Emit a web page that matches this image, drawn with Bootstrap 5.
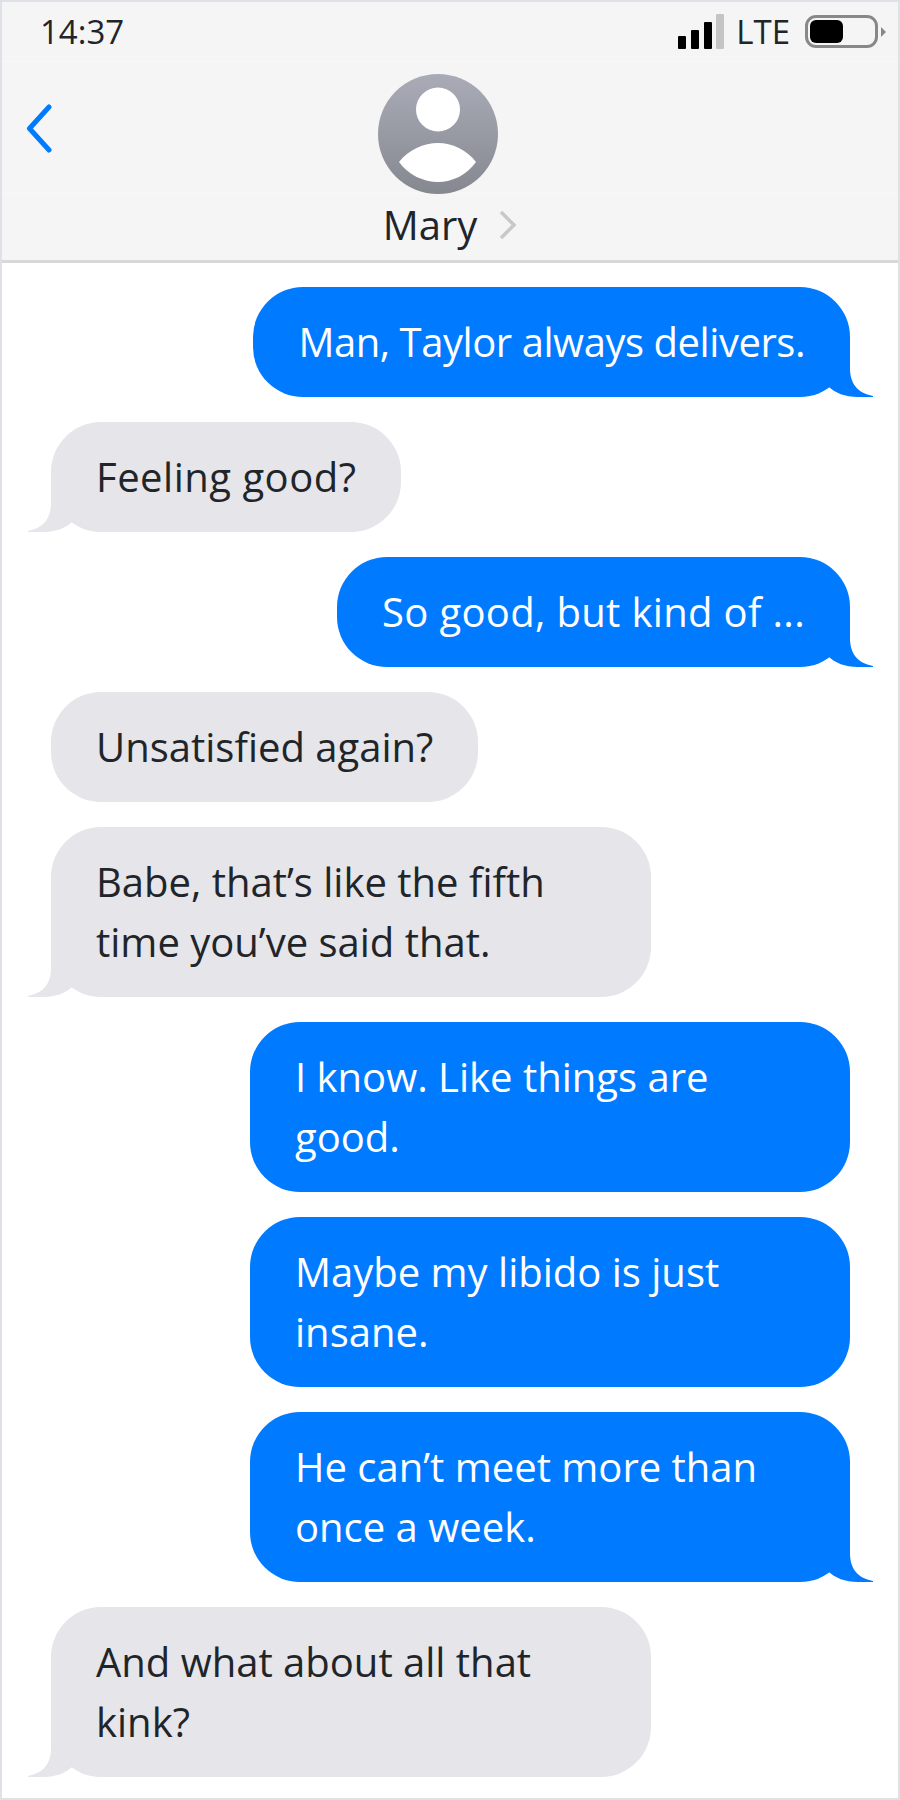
<!DOCTYPE html>
<html lang="en">
<head>
<meta charset="UTF-8">
<title>Messages</title>
<link rel="stylesheet" href="https://cdn.jsdelivr.net/npm/bootstrap@5.3.0/dist/css/bootstrap.min.css">
<style>
    body { background: #fff; font-family: "Open Sans", "Noto Sans", sans-serif; }
    .phone { width: 900px; height: 1800px; border: 2px solid #dee2e6; overflow: hidden; color: #212529; }
    .phone-head { height: 261px; background: #f5f5f5; border-bottom: 3px solid #d8d8d8; }
    .status-row { height: 60px; padding: 0 12px 0 38px; font-size: 33px; border-bottom: 1px solid #f8f8f8; }
    .signal { height: 35px; gap: 4.6px; }
    .signal i { display: block; width: 8px; background: #000; border-radius: 1px; }
    .signal i:last-child { background: #c4c4c4; }
    .lte-label { margin: 0 15px 0 12px; line-height: 1; }
    .batt { width: 73px; height: 33px; border: 3px solid #888; border-radius: 11px; padding: 2px; }
    .batt span { display: block; width: 33px; height: 100%; background: #000; border-radius: 6px; }
    .batt-nub { width: 0; height: 0; border-left: 5px solid #888; border-top: 5px solid transparent; border-bottom: 5px solid transparent; margin-left: 3px; }
    .nav-row { height: 132px; position: relative; border-bottom: 1px solid #f8f8f8; }
    .back-btn { position: absolute; left: 24px; top: 42px; }
    .avatar-pic { margin: 12px 24px 0 0; }
    .contact-row { height: 62px; gap: 22px; }
    .contact-name { font-size: 40px; line-height: 1; }
    .thread { padding: 24px 48px 0 49px; gap: 25px; }
    .bub { position: relative; max-width: 600px; padding: 25px 45px; font-size: 40px; line-height: 60px; border-radius: 50px; }
    .bub-me { background: #007aff; color: #fff; margin-left: auto; }
    .bub-them { background: #e5e5ea; color: #212529; margin-right: auto; }
    .bub-wide { width: 600px; }
    .track-tight { letter-spacing: -0.45px; }
    .track-mid { letter-spacing: 0.33px; }
    .track-loose { letter-spacing: 0.5px; }
    .tail { position: absolute; bottom: 0; width: 70px; height: 60px; }
    .bub-me .tail { right: -23px; fill: #007aff; }
    .bub-them .tail { left: -23px; fill: #e5e5ea; transform: scaleX(-1); }
</style>
</head>
<body>
<div class="phone">
    <div class="phone-head">
        <div class="status-row d-flex align-items-center">
            <span>14:37</span>
            <div class="signal d-flex align-items-end ms-auto">
                <i style="height:13px"></i><i style="height:19px"></i><i style="height:27px"></i><i style="height:35px"></i>
            </div>
            <span class="lte-label">LTE</span>
            <div class="batt"><span></span></div>
            <div class="batt-nub"></div>
        </div>
        <div class="nav-row d-flex justify-content-center">
            <svg class="back-btn" width="32" height="52" viewBox="0 0 32 52"><path d="M23 3 L3.5 24.5 L23 46" fill="none" stroke="#007aff" stroke-width="5" stroke-linecap="round" stroke-linejoin="round"/></svg>
            <svg class="avatar-pic" width="120" height="120" viewBox="0 0 120 120">
                <defs><linearGradient id="av" x1="0" y1="0" x2="0" y2="1"><stop offset="0" stop-color="#a9acb7"/><stop offset="1" stop-color="#868890"/></linearGradient></defs>
                <circle cx="60" cy="60" r="60" fill="url(#av)"/>
                <circle cx="60" cy="35.5" r="22" fill="#fff"/>
                <path d="M21 88 C30 76 46 69 60 69 C74 69 89 76 98 88 C89 101 74 108 60 108 C46 108 30 101 21 88 Z" fill="#fff"/>
            </svg>
        </div>
        <div class="contact-row d-flex justify-content-center align-items-center">
            <span class="contact-name">Mary</span>
            <svg width="18" height="30" viewBox="0 0 18 30"><path d="M2 2 L15 15 L2 28" fill="none" stroke="#c8c8c8" stroke-width="3.5"/></svg>
        </div>
    </div>
    <div class="thread d-flex flex-column">
        <div class="bub bub-me track-tight">Man, Taylor always delivers.<svg class="tail"><use href="#tailshape"/></svg></div>
        <div class="bub bub-them track-loose">Feeling good?<svg class="tail"><use href="#tailshape"/></svg></div>
        <div class="bub bub-me track-mid">So good, but kind of ...<svg class="tail"><use href="#tailshape"/></svg></div>
        <div class="bub bub-them">Unsatisfied again?</div>
        <div class="bub bub-them bub-wide">Babe, that’s like the fifth time you’ve said that.<svg class="tail"><use href="#tailshape"/></svg></div>
        <div class="bub bub-me bub-wide">I know. Like things are good.</div>
        <div class="bub bub-me bub-wide">Maybe my libido is just insane.</div>
        <div class="bub bub-me bub-wide">He can’t meet more than once a week.<svg class="tail"><use href="#tailshape"/></svg></div>
        <div class="bub bub-them bub-wide">And what about all that kink?<svg class="tail"><use href="#tailshape"/></svg></div>
    </div>
</div>
<svg width="0" height="0" class="d-block"><defs><path id="tailshape" d="M47 0 L47 31 C47 46 54 56 70 59 L70 60 L55 60 C42 60 32 56 25 49 L30 30 Z"/></defs></svg>
<script src="https://cdn.jsdelivr.net/npm/bootstrap@5.3.0/dist/js/bootstrap.bundle.min.js"></script>
</body>
</html>
